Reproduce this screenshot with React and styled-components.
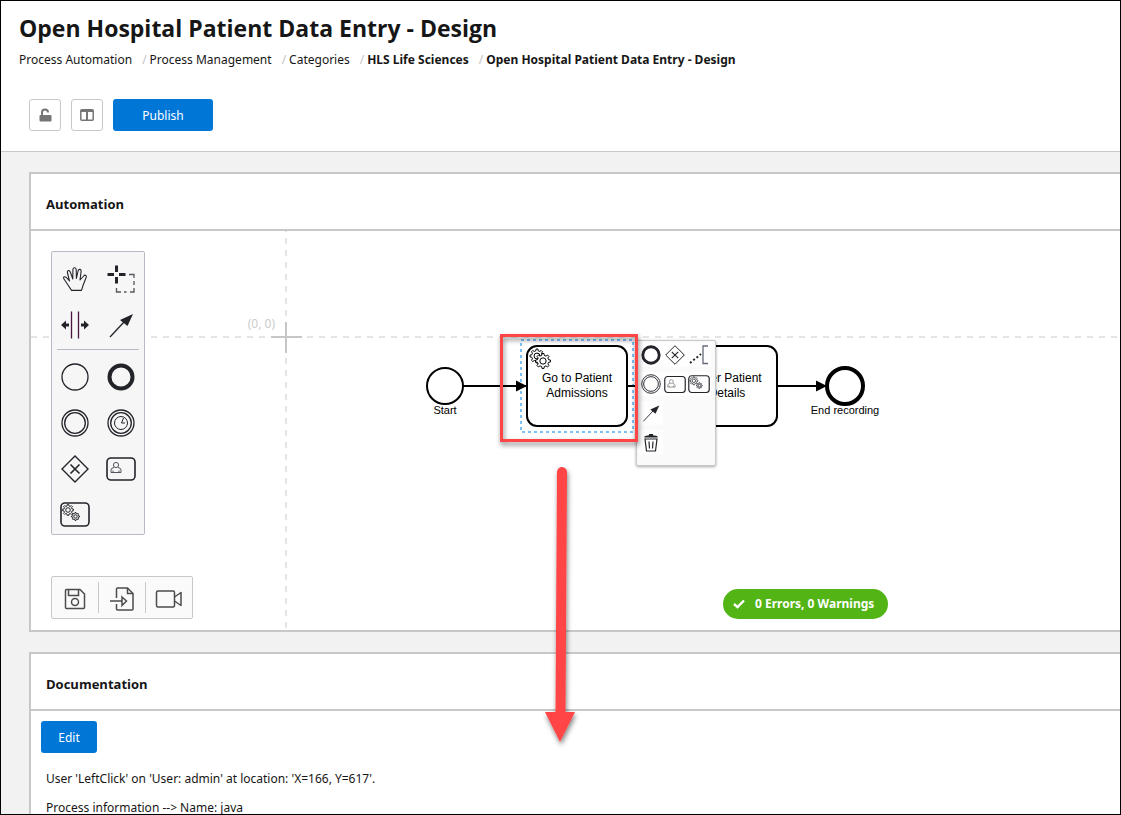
import React from 'react';
import styled, { createGlobalStyle } from 'styled-components';

const UI_FONT = '"Noto Sans", "Open Sans", sans-serif';
const TITLE_FONT = '"Open Sans", "Noto Sans", sans-serif';
const DIAGRAM_FONT = '"Liberation Sans", Arial, sans-serif';
const INK = '#22242a';

const GlobalStyle = createGlobalStyle`
  * { box-sizing: border-box; }
  body {
    margin: 0;
    font-family: ${UI_FONT};
    font-size: 12px;
    line-height: 18px;
    color: #161616;
    background: #f2f2f2;
  }
`;

const Page = styled.div`
  position: relative;
  height: 100vh;
  overflow: hidden;
  border: 1px solid #000;
  background: #f2f2f2;
`;

const Header = styled.header`
  background: #fff;
  border-bottom: 1px solid #c8c8c8;
  padding: 10px 18px 20px;
`;

const Title = styled.h1`
  margin: 0;
  font-family: ${TITLE_FONT};
  font-size: 23px;
  line-height: 34px;
  font-weight: 700;
`;

const Crumbs = styled.ol`
  display: flex;
  margin: 6px 0 0;
  padding: 0;
  list-style: none;
`;

const Crumb = styled.li`
  display: flex;
  white-space: nowrap;
  & + &::before {
    content: '/';
    color: #c4c4c4;
    margin: 0 3px 0 10px;
  }
`;

const CrumbLink = styled.a`
  color: inherit;
  text-decoration: none;
  font-weight: ${(p) => (p.$strong ? 700 : 400)};
`;

const Actions = styled.div`
  display: flex;
  gap: 10px;
  margin: 30px 10px 0;
`;

const IconButton = styled.button`
  display: grid;
  place-items: center;
  width: 32px;
  height: 32px;
  padding: 0;
  color: #757575;
  background: #fff;
  border: 1px solid #c8c8c8;
  border-radius: 3px;
`;

const PrimaryButton = styled.button`
  width: ${(p) => (p.$wide ? 100 : 56)}px;
  height: 32px;
  padding: 2px 0 0;
  border: 0;
  border-radius: 3px;
  background: #0076d7;
  color: #fff;
  font: 400 12px/18px ${UI_FONT};
`;

const Main = styled.main`
  display: flex;
  flex-direction: column;
  gap: 20px;
  padding: 20px 0 0 28px;
`;

const Card = styled.section`
  background: #fff;
  border: 2px solid #c8c8c8;
  border-right: 0;
`;

const CardTitle = styled.h2`
  margin: 0;
  padding: 21px 15px 16px;
  border-bottom: 2px solid #c8c8c8;
  font-family: ${TITLE_FONT};
  font-size: 13px;
  line-height: 18px;
  font-weight: 700;
`;

const Canvas = styled.div`
  position: relative;
  height: 399px;
  overflow: hidden;
`;

const Diagram = styled.svg`
  display: block;
  width: 100%;
  height: 100%;
  font-family: ${DIAGRAM_FONT};
`;

const NodeText = styled.text`
  font-size: ${(p) => (p.$small ? 11 : 12)}px;
  text-anchor: middle;
`;

const OriginText = styled.text`
  font: 12px ${UI_FONT};
  text-anchor: end;
  fill: #ccc;
`;

const Palette = styled.div`
  position: absolute;
  top: 20px;
  left: 20px;
  width: 94px;
  padding: 8px 4px 0;
  background: #f6f6f6;
  border: 1px solid #bab9c6;
  border-radius: 2px;
`;

const ToolGrid = styled.div`
  display: grid;
  grid-template-columns: repeat(2, 38px);
  grid-auto-rows: 38px;
  gap: 8px;
`;

const Divider = styled.hr`
  height: 1px;
  margin: 5px 1px 8px;
  border: 0;
  background: #bab9c6;
`;

const ToolButton = styled.button`
  display: grid;
  place-items: center;
  padding: 0;
  border: 0;
  background: none;
  color: ${INK};
`;

const FileBar = styled.div`
  position: absolute;
  top: 345px;
  left: 20px;
  display: flex;
  align-items: center;
  width: 142px;
  height: 43px;
  background: #fafafa;
  border: 1px solid #c8c8c8;
  border-radius: 2px;
`;

const FileButton = styled(ToolButton)`
  flex: 1;
  height: 31px;
  padding-top: 2px;
  color: #4c4c4e;
  & + & { border-left: 1px solid #c8c8c8; }
`;

const ContextPad = styled.div`
  position: absolute;
  top: 109px;
  left: 605px;
  width: 80px;
  height: 126px;
  display: grid;
  grid-template-columns: repeat(3, 24px);
  grid-auto-rows: 24px;
  gap: 5px 0;
  align-content: start;
  padding: 2px;
  background: #fafafa;
  border: 1px solid #c8c8c8;
  border-radius: 2px;
  box-shadow: 0 1px 3px rgba(0, 0, 0, 0.35);
`;

const PadButton = styled(ToolButton)`
  background: #fefefe;
  grid-column: ${(p) => (p.$newRow ? 1 : 'auto')};
`;

const Status = styled.div`
  position: absolute;
  top: 358px;
  left: 692px;
  display: flex;
  align-items: center;
  gap: 10px;
  height: 30px;
  padding: 0 14px 0 10px;
  border-radius: 15px;
  background: #52b415;
  color: #fff;
  font-weight: 700;
  white-space: nowrap;
`;

const DocBody = styled.div`
  padding: 10px;
`;

const DocText = styled.p`
  margin: ${(p) => (p.$first ? 17 : 11)}px 5px 0;
`;

const Annotation = styled.svg`
  position: absolute;
  top: 320px;
  left: 490px;
  pointer-events: none;
`;

const SvgIcon = ({ size = 28, w, h, box, children, sw = 1.3 }) => (
  <svg
    width={w || size}
    height={h || size}
    viewBox={box || `0 0 ${w || size} ${h || size}`}
    fill="none"
    stroke="currentColor"
    strokeWidth={sw}
    aria-hidden="true"
  >
    {children}
  </svg>
);

// Outline of a cog with flat-topped teeth, centred on (cx, cy).
const cogPath = (cx, cy, outer, inner, teeth = 8) => {
  const pts = [];
  const step = (Math.PI * 2) / teeth;
  for (let i = 0; i < teeth; i += 1) {
    const a = i * step;
    [[-0.3, inner], [-0.17, outer], [0.17, outer], [0.3, inner]].forEach(([t, r]) => {
      pts.push(`${(cx + r * Math.cos(a + t * step)).toFixed(2)} ${(cy + r * Math.sin(a + t * step)).toFixed(2)}`);
    });
  }
  return `M${pts.join('L')}Z`;
};

const Cog = ({ cx, cy, r, fill = 'none', sw = 1 }) => (
  <g strokeWidth={sw} fill={fill}>
    <path d={cogPath(cx, cy, r, r * 0.76)} />
    <circle cx={cx} cy={cy} r={r * 0.42} />
  </g>
);

const HandIcon = () => (
  <SvgIcon size={24} sw={1.1}>
    <path
      strokeLinejoin="round"
      d="M8.5 23.4L5 18L1 12Q0 10 1.5 9.8Q3 9.6 6.5 14L4.4 5.5Q4.3 3.5 5.6 3.5Q6.9 3.5 7.5 5.5L9.8 12L9.9 2.5Q10.1 .8 11.6 .8Q13 .8 13.2 2.5L13.4 11.5L15.2 3.5Q15.7 2.1 17 2.4Q18.3 2.7 18.1 4.5L17 13L20.7 9Q21.5 7.8 22.6 8.3Q23.7 8.8 23.1 10.5L20.2 18L18.5 23.4Z"
    />
  </SvgIcon>
);

const LassoIcon = () => (
  <SvgIcon size={28} sw={3}>
    <path d="M0.5 9.5H7M12 9.5H18.5M9.5 .5V7M9.5 12V18.5" />
    <path
      strokeWidth="1.3"
      stroke="#55565c"
      d="M22 9.5H27V13M27 16V20M27 23V27H23M19.5 27H17M14 27H9.5V23"
    />
  </SvgIcon>
);

const SpaceIcon = () => (
  <SvgIcon w={28} h={28} sw={1.3}>
    <path d="M10.5 .5V27.5M17.5 .5V27.5" stroke="#4a1640" />
    <path fill="currentColor" stroke="none" d="M0 14L5 9.5V12.5H8V15.5H5V18.5ZM28 14L23 9.5V12.5H20V15.5H23V18.5Z" />
  </SvgIcon>
);

const ConnectIcon = ({ size = 26 }) => (
  <SvgIcon size={size} box="0 0 26 26" sw={1.3}>
    <path d="M2 25L16 10" />
    <path fill="currentColor" stroke="none" d="M25 2L19.5 14L12 8Z" />
  </SvgIcon>
);

const StartIcon = () => (
  <SvgIcon>
    <circle cx="14" cy="14" r="13" />
  </SvgIcon>
);

const EndIcon = ({ size = 28 }) => (
  <SvgIcon size={size} box="0 0 28 28" sw={4}>
    <circle cx="14" cy="14" r="11.5" />
  </SvgIcon>
);

const IntermediateIcon = ({ size = 28 }) => (
  <SvgIcon size={size} box="0 0 28 28" sw={1.3}>
    <circle cx="14" cy="14" r="13" />
    <circle cx="14" cy="14" r="10.3" />
  </SvgIcon>
);

const TimerIcon = () => (
  <SvgIcon sw={1.3}>
    <circle cx="14" cy="14" r="13" />
    <circle cx="14" cy="14" r="10.3" />
    <circle cx="14" cy="14" r="6.5" strokeWidth="1" />
    <path d="M16.5 9L14.5 14H18" strokeWidth="1" />
  </SvgIcon>
);

const GatewayIcon = ({ size = 28 }) => (
  <SvgIcon size={size} box="0 0 28 28" sw={1.4}>
    <path d="M14 1L27 14L14 27L1 14Z" />
    <path d="M9.5 9.5L18.5 18.5M18.5 9.5L9.5 18.5" strokeWidth="1.6" />
  </SvgIcon>
);

const UserTaskIcon = ({ w = 30, h = 26, color = '#55565c' }) => (
  <SvgIcon w={w} h={h} box="0 0 30 26" sw={1.6}>
    <rect x="1" y="2" width="28" height="22" rx="4" />
    <g strokeWidth="1" stroke={color}>
      <circle cx="10" cy="9" r="2.6" />
      <path d="M8 11.5Q5 12 5 14V16.5H15V14Q15 12 12 11.5M7 14.5V16.5M13 14.5V16.5" />
    </g>
  </SvgIcon>
);

const ServiceTaskIcon = ({ w = 30, h = 26 }) => (
  <SvgIcon w={w} h={h} box="0 0 30 26" sw={1.6}>
    <rect x="1" y="1" width="28" height="23" rx="4" />
    <Cog cx={8} cy={8} r={5.5} />
    <Cog cx={15.5} cy={14.5} r={4} />
  </SvgIcon>
);

const AnnotationIcon = () => (
  <SvgIcon w={20} h={20} sw={1.3}>
    <path d="M19 1H14V18.5H19" stroke="#666a78" />
    <path d="M1 18L12 9" strokeWidth="2" strokeDasharray="2 2.2" />
  </SvgIcon>
);

const TrashIcon = () => (
  <SvgIcon w={16} h={19} sw={1.2}>
    <path d="M2 6L3.5 18H12.5L14 6ZM6 8.5L6.5 15.5M10 8.5L9.5 15.5" />
    <path d="M1 4.5L2 3L6 2.3V1H10V2.3L14 3L15 4.5Z" fill="currentColor" stroke="none" />
  </SvgIcon>
);

const SaveIcon = () => (
  <SvgIcon w={22} h={22} sw={1.5}>
    <path strokeLinejoin="round" d="M2.5 1.5H16L20.5 6V19.5Q20.5 20.5 19.5 20.5H2.5Q1.5 20.5 1.5 19.5V2.5Q1.5 1.5 2.5 1.5Z" />
    <path d="M4.5 1.5V7.5H14.5V1.5" />
    <circle cx="11" cy="14" r="3.5" />
  </SvgIcon>
);

const ImportIcon = () => (
  <SvgIcon w={26} h={24} sw={1.5}>
    <path strokeLinejoin="round" d="M7.5 11V2Q7.5 1 8.5 1H18.5L24 6.5V22Q24 23 23 23H8.5Q7.5 23 7.5 22V17" />
    <path d="M18.5 1V6.5H24" />
    <path d="M1 14H13M13 10L17.5 14L13 18.5Z" />
  </SvgIcon>
);

const VideoIcon = () => (
  <SvgIcon w={28} h={20} sw={1.5}>
    <rect x="1.5" y="2" width="18" height="16" rx="1.5" />
    <path strokeLinejoin="round" d="M19.5 8L26 3.5V16.5L19.5 12" />
  </SvgIcon>
);

const UnlockIcon = () => (
  <SvgIcon w={13} h={14} sw={2}>
    <path d="M3 8V4.5A3 3 0 0 1 9 4.5" />
    <rect x="0.5" y="7" width="12" height="6.5" rx="1" fill="currentColor" stroke="none" />
  </SvgIcon>
);

const ColumnsIcon = () => (
  <SvgIcon w={14} h={12} sw={1.5}>
    <rect x="0.8" y="0.8" width="12.4" height="10.4" rx="1" />
    <path d="M1 2H13M7 2V11" strokeWidth="2" />
  </SvgIcon>
);

const CheckIcon = () => (
  <SvgIcon w={12} h={10} sw={2.4}>
    <path d="M1 5L4.5 8.2L11 1.5" />
  </SvgIcon>
);

const crumbs = [
  { label: 'Process Automation' },
  { label: 'Process Management' },
  { label: 'Categories' },
  { label: 'HLS Life Sciences', strong: true },
  { label: 'Open Hospital Patient Data Entry - Design', strong: true },
];

const generalTools = [
  ['Hand tool', HandIcon],
  ['Lasso tool', LassoIcon],
  ['Space tool', SpaceIcon],
  ['Connect', ConnectIcon],
];

const shapeTools = [
  ['Start event', StartIcon],
  ['End event', EndIcon],
  ['Intermediate event', IntermediateIcon],
  ['Timer event', TimerIcon],
  ['Gateway', GatewayIcon],
  ['User task', UserTaskIcon],
  ['Service task', ServiceTaskIcon],
];

// Coordinates are relative to the (0, 0) mark of the modelling canvas.
const ProcessDiagram = () => (
  <Diagram role="img" aria-label="Process diagram">
    <defs>
      <marker id="flow" viewBox="0 0 12 12" refX="12" refY="6" markerWidth="12" markerHeight="12" markerUnits="userSpaceOnUse">
        <path d="M1 0.5L12 6L1 11.5Z" />
      </marker>
    </defs>
    <g transform="translate(255 106)">
      <g stroke="#e4e4e4" strokeWidth="2" strokeDasharray="6 6">
        <path d="M-267 0H1800" />
        <path d="M0 -111V320" />
      </g>
      <path d="M-15 0H16M0 -15V16" stroke="#c6c6c6" strokeWidth="2" />
      <OriginText x="-11" y="-9">(0, 0)</OriginText>
      <g stroke="#000" strokeWidth="2" fill="#fff">
        <circle cx="159" cy="49" r="18" />
        <rect x="241" y="9" width="100" height="80" rx="10" />
        <rect x="391" y="9" width="100" height="80" rx="10" />
        <circle cx="559" cy="49" r="18" strokeWidth="4" />
      </g>
      <rect x="235" y="3" width="112" height="92" fill="none" stroke="#7cc1f6" strokeWidth="2" strokeDasharray="3 3" />
      <g stroke="#000" strokeWidth="2">
        <path d="M177 49H241" markerEnd="url(#flow)" />
        <path d="M341 49H391" markerEnd="url(#flow)" />
        <path d="M491 49H541" markerEnd="url(#flow)" />
      </g>
      <g stroke="#000">
        <Cog cx={251} cy={19} r={7} fill="#fff" />
        <Cog cx={257} cy={24} r={7.5} fill="#fff" />
      </g>
      <NodeText $small x="159" y="77">Start</NodeText>
      <NodeText x="291" y="45">Go to Patient</NodeText>
      <NodeText x="291" y="60">Admissions</NodeText>
      <NodeText x="441" y="45">Enter Patient</NodeText>
      <NodeText x="441" y="60">Details</NodeText>
      <NodeText $small x="559" y="77">End recording</NodeText>
    </g>
  </Diagram>
);

export default function App() {
  return (
    <>
      <GlobalStyle />
      <Page>
        <Header>
          <Title>Open Hospital Patient Data Entry - Design</Title>
          <nav aria-label="Breadcrumb">
            <Crumbs>
              {crumbs.map((c) => (
                <Crumb key={c.label}>
                  <CrumbLink href="#" $strong={c.strong}>{c.label}</CrumbLink>
                </Crumb>
              ))}
            </Crumbs>
          </nav>
          <Actions>
            <IconButton aria-label="Unlock"><UnlockIcon /></IconButton>
            <IconButton aria-label="Columns"><ColumnsIcon /></IconButton>
            <PrimaryButton $wide>Publish</PrimaryButton>
          </Actions>
        </Header>
        <Main>
          <Card>
            <CardTitle>Automation</CardTitle>
            <Canvas>
              <ProcessDiagram />
              <Palette>
                <ToolGrid>
                  {generalTools.map(([label, Icon]) => (
                    <ToolButton key={label} aria-label={label}><Icon /></ToolButton>
                  ))}
                </ToolGrid>
                <Divider />
                <ToolGrid>
                  {shapeTools.map(([label, Icon]) => (
                    <ToolButton key={label} aria-label={label}><Icon /></ToolButton>
                  ))}
                </ToolGrid>
              </Palette>
              <FileBar>
                <FileButton aria-label="Save"><SaveIcon /></FileButton>
                <FileButton aria-label="Import"><ImportIcon /></FileButton>
                <FileButton aria-label="Record"><VideoIcon /></FileButton>
              </FileBar>
              <ContextPad>
                <PadButton aria-label="Append end event"><EndIcon size={20} /></PadButton>
                <PadButton aria-label="Append gateway"><GatewayIcon size={20} /></PadButton>
                <PadButton aria-label="Add annotation"><AnnotationIcon /></PadButton>
                <PadButton aria-label="Append intermediate event"><IntermediateIcon size={20} /></PadButton>
                <PadButton aria-label="Append user task"><UserTaskIcon w={22} h={19} color="#777" /></PadButton>
                <PadButton aria-label="Append service task"><ServiceTaskIcon w={22} h={19} /></PadButton>
                <PadButton $newRow aria-label="Connect"><ConnectIcon size={18} /></PadButton>
                <PadButton $newRow aria-label="Remove"><TrashIcon /></PadButton>
              </ContextPad>
              <Status role="status">
                <CheckIcon />
                0 Errors, 0 Warnings
              </Status>
            </Canvas>
          </Card>
          <Card>
            <CardTitle>Documentation</CardTitle>
            <DocBody>
              <PrimaryButton>Edit</PrimaryButton>
              <DocText $first>User 'LeftClick' on 'User: admin' at location: 'X=166, Y=617'.</DocText>
              <DocText>Process information --&gt; Name: java</DocText>
            </DocBody>
          </Card>
        </Main>
        <Annotation width="170" height="440" aria-hidden="true">
          <defs>
            <filter id="drop" x="-30%" y="-10%" width="160%" height="120%" filterUnits="objectBoundingBox">
              <feDropShadow dx="1" dy="3" stdDeviation="2.5" floodColor="#000" floodOpacity="0.5" />
            </filter>
          </defs>
          <g filter="url(#drop)">
            <rect x="10.5" y="14.5" width="135" height="105" fill="none" stroke="#ff4444" strokeWidth="3" />
            <path d="M71 151L69.5 393" stroke="#ff4444" strokeWidth="10" strokeLinecap="round" />
            <path d="M54 391H84L69 421Z" fill="#ff4444" />
          </g>
        </Annotation>
      </Page>
    </>
  );
}
